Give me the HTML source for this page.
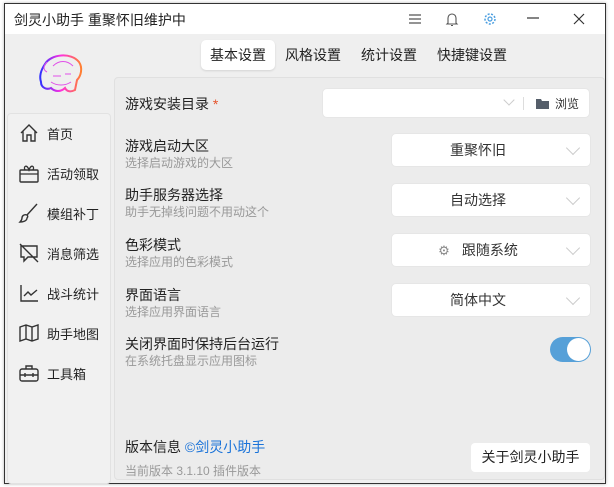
<!DOCTYPE html>
<html><head><meta charset="utf-8"><style>
*{margin:0;padding:0;box-sizing:border-box}
body{width:614px;height:487px;background:#fff;font-family:"Liberation Sans","Noto Sans CJK SC",sans-serif;position:relative;overflow:hidden;color:#333}
.win{position:absolute;left:4px;top:3px;width:602px;height:481px;border:1px solid #333;background:#efefef;box-shadow:0 0 3px rgba(0,0,0,.3)}
.title{position:absolute;left:0;top:0;width:600px;height:30px;background:#fff}
.title .t{position:absolute;left:9px;top:6px;font-size:14px;color:#222}
.side{position:absolute;left:2px;top:109px;width:104px;height:371px;background:#f1f1f1;border:1px solid #e2e2e2;border-radius:4px}
.nav{position:absolute;left:10px;font-size:13px;color:#222;display:flex;align-items:center}
.nav svg{width:22px;height:22px;margin-right:7px}
.content{position:absolute;left:109px;top:73px;width:491px;height:403px;background:#ececec;border:1px solid #e0e0e0;border-radius:4px}
.tab{position:absolute;top:36px;height:30px;font-size:14px;color:#222;line-height:30px;padding:0 9px}
.tab.a{background:#fff;border-radius:5px;box-shadow:0 1px 2px rgba(0,0,0,.12)}
.lbl{position:absolute;left:120px;font-size:14px;color:#222}
.sub{position:absolute;left:120px;font-size:12px;color:#999}
.sel{position:absolute;left:386px;width:200px;height:34px;background:#fff;border-radius:5px;border:1px solid #e6e6e6;font-size:14px;color:#333;text-align:center;line-height:32px;padding-right:26px}
.sel:after{content:"";position:absolute;right:12px;top:9px;width:9px;height:9px;border-right:1px solid #ccc;border-bottom:1px solid #ccc;transform:rotate(45deg)}
</style></head><body>
<div class="win">
<div class="title"><span class="t">剑灵小助手 重聚怀旧维护中</span>
<svg style="position:absolute;left:403px;top:9px" width="14" height="12"><path d="M1 2h12M1 6h12M1 10h12" stroke="#555" stroke-width="1.3"/></svg>
<svg style="position:absolute;left:440px;top:8px" width="14" height="15"><path d="M3 11V6a4 4 0 0 1 8 0v5l1 1H2zM6 13.5h2" stroke="#555" fill="none" stroke-width="1.1"/></svg>
<svg style="position:absolute;left:478px;top:8px" width="14" height="14"><circle cx="7" cy="7" r="2" fill="none" stroke="#4a9ee0" stroke-width="1.2"/><circle cx="7" cy="7" r="5" fill="none" stroke="#4a9ee0" stroke-width="1.5" stroke-dasharray="2 1.5"/></svg>
<svg style="position:absolute;left:522px;top:12px" width="12" height="4"><path d="M0 2h12" stroke="#333" stroke-width="1.2"/></svg>
<svg style="position:absolute;left:568px;top:9px" width="12" height="12"><path d="M1 1l10 10M11 1L1 11" stroke="#333" stroke-width="1.2"/></svg>
</div>
<svg style="position:absolute;left:28px;top:48px" width="54" height="46"><defs><linearGradient id="g"><stop offset="0" stop-color="#3030ff"/><stop offset=".5" stop-color="#ff30e0"/><stop offset="1" stop-color="#ff8030"/></linearGradient></defs><path d="M12 12c6-10 26-12 34-2 4 6 2 14-2 18l-2 10c-4 2-8 2-10-2-4 4-10 4-14 0-4 2-10 0-10-6-2-6 0-12 4-18z" fill="none" stroke="url(#g)" stroke-width="2"/><path d="M14 10c-4 4-4 8 0 10M20 14c6-6 14-6 20 0M20 24h8M32 22h6M18 30c6 4 14 4 20 0" stroke="#e050e8" stroke-width="1" fill="none"/></svg>
<div class="tab a" style="left:196px">基本设置</div>
<div class="tab" style="left:271px">风格设置</div>
<div class="tab" style="left:347px">统计设置</div>
<div class="tab" style="left:423px">快捷键设置</div>
<div class="side">
<div class="nav" style="top:8px"><svg viewBox="0 0 22 22"><path d="M3 11L11 3l8 8M5 9v10h4v-6h4v6h4V9" fill="none" stroke="#333" stroke-width="1.4"/></svg>首页</div>
<div class="nav" style="top:48px"><svg viewBox="0 0 22 22"><rect x="2" y="8" width="18" height="12" rx="1" fill="none" stroke="#333" stroke-width="1.4"/><path d="M2 12h18M7 8c-2-4 2-6 4 0 2-6 6-4 4 0" fill="none" stroke="#333" stroke-width="1.3"/></svg>活动领取</div>
<div class="nav" style="top:88px"><svg viewBox="0 0 22 22"><path d="M19 2L9 13M9 13c-3-1-5 1-5 3s-1 3-2 4c3 0 7-1 7-4 1-1 1-2 0-3z" fill="none" stroke="#333" stroke-width="1.4"/></svg>模组补丁</div>
<div class="nav" style="top:128px"><svg viewBox="0 0 22 22"><path d="M3 4h16v11H10l-4 4v-4H3zM2 2l18 18" fill="none" stroke="#333" stroke-width="1.4"/></svg>消息筛选</div>
<div class="nav" style="top:168px"><svg viewBox="0 0 22 22"><path d="M3 3v16h17M6 14l4-4 3 3 6-5" fill="none" stroke="#333" stroke-width="1.4"/></svg>战斗统计</div>
<div class="nav" style="top:208px"><svg viewBox="0 0 22 22"><path d="M2 5l6-2 6 2 6-2v14l-6 2-6-2-6 2zM8 3v14M14 5v14" fill="none" stroke="#333" stroke-width="1.4"/></svg>助手地图</div>
<div class="nav" style="top:248px"><svg viewBox="0 0 22 22"><rect x="2" y="7" width="18" height="12" rx="2" fill="none" stroke="#333" stroke-width="1.4"/><path d="M8 7V4h6v3M2 13h18M7 11v4M15 11v4" fill="none" stroke="#333" stroke-width="1.4"/></svg>工具箱</div>
</div>
<div class="content"></div>
<div class="lbl" style="top:90px">游戏安装目录 <span style="color:#e5532b">*</span></div>
<div style="position:absolute;left:317px;top:84px;width:268px;height:30px;background:#fff;border-radius:5px;border:1px solid #e6e6e6">
<div style="position:absolute;left:182px;top:7px;width:8px;height:8px;border-right:1px solid #ccc;border-bottom:1px solid #ccc;transform:rotate(45deg)"></div>
<div style="position:absolute;left:200px;top:8px;width:1px;height:13px;background:#ddd"></div>
<svg style="position:absolute;left:213px;top:9px" width="13" height="11"><path d="M0 1h5l1 2h7v8H0z" fill="#555e6a"/></svg>
<span style="position:absolute;left:232px;top:6px;font-size:12px;color:#333">浏览</span></div>
<div class="lbl" style="top:132px">游戏启动大区</div><div class="sub" style="top:150px">选择启动游戏的大区</div>
<div class="sel" style="top:129px">重聚怀旧</div>
<div class="lbl" style="top:181px">助手服务器选择</div><div class="sub" style="top:199px">助手无掉线问题不用动这个</div>
<div class="sel" style="top:179px">自动选择</div>
<div class="lbl" style="top:231px">色彩模式</div><div class="sub" style="top:249px">选择应用的色彩模式</div>
<div class="sel" style="top:229px"><span style="color:#888;font-size:13px;margin-right:12px">⚙</span>跟随系统</div>
<div class="lbl" style="top:281px">界面语言</div><div class="sub" style="top:299px">选择应用界面语言</div>
<div class="sel" style="top:279px">简体中文</div>
<div class="lbl" style="top:330px">关闭界面时保持后台运行</div><div class="sub" style="top:348px">在系统托盘显示应用图标</div>
<div style="position:absolute;left:545px;top:333px;width:41px;height:25px;border-radius:13px;background:#56a0d8"><div style="position:absolute;right:1px;top:1px;width:23px;height:23px;border-radius:50%;background:#fff"></div></div>
<div class="lbl" style="top:433px">版本信息 <span style="color:#1a73d9">©剑灵小助手</span></div>
<div class="sub" style="top:458px">当前版本 3.1.10 插件版本</div>
<div style="position:absolute;left:466px;top:439px;width:119px;height:29px;background:#fff;border-radius:4px;font-size:14px;text-align:center;line-height:29px;color:#222">关于剑灵小助手</div>
</div>
</body></html>
